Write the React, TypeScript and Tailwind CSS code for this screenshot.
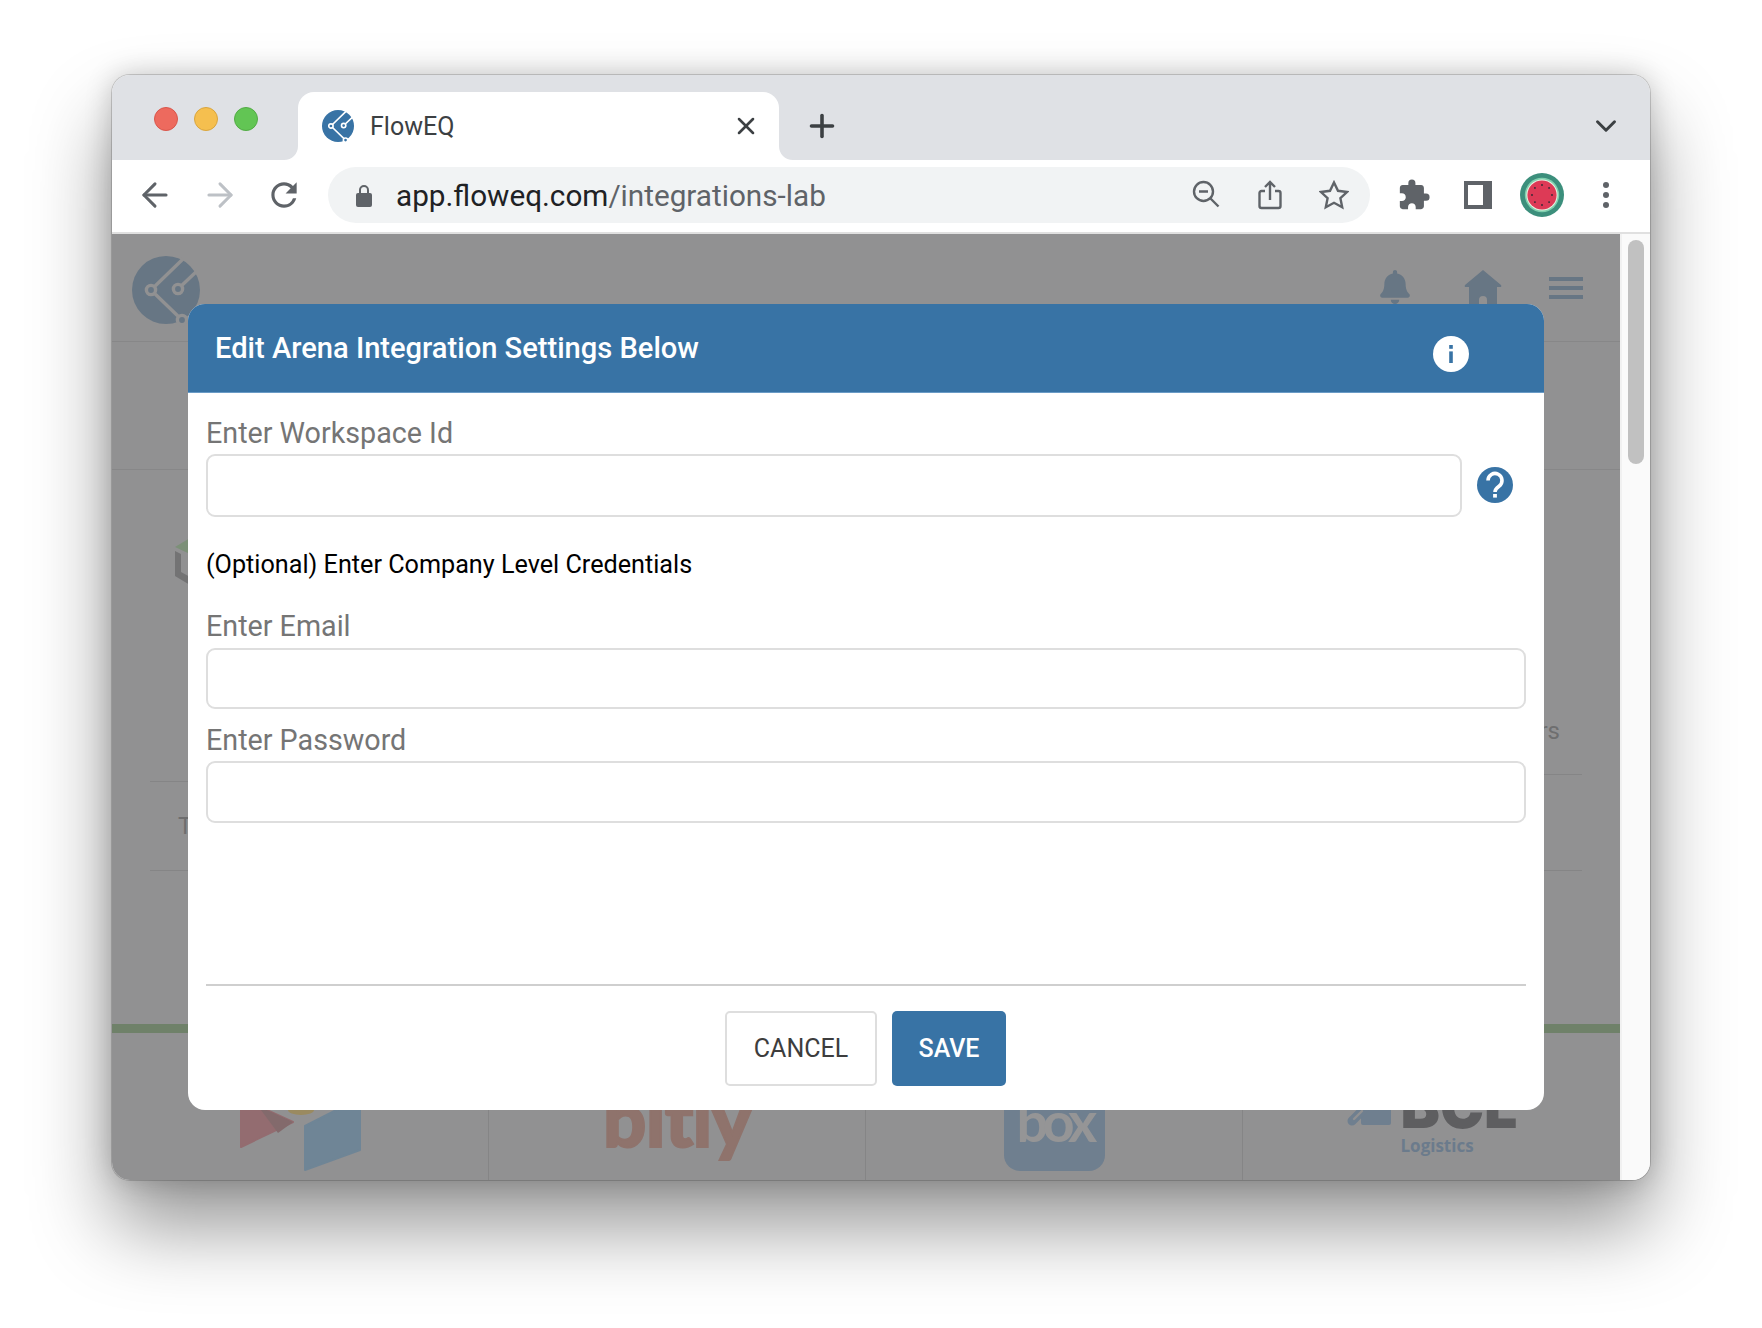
import React from 'react';
import { ArrowLeft, ArrowRight, ChevronDown, Plus, X } from 'lucide-react';
import { MdExtension, MdRefresh } from 'react-icons/md';
import { FaBell } from 'react-icons/fa';

function FlowLogo({ size, fill, line }: { size: number; fill: string; line: string }) {
  return (
    <svg width={size} height={size} viewBox="0 0 68 68" className="overflow-visible shrink-0">
      <circle cx="34" cy="34" r="34" fill={fill} />
      <g stroke={line} strokeWidth="3.4" fill={fill}>
        <path d="M19 34 51 3M46 33 65 15M19 34 50 64" fill="none" />
        <circle cx="19" cy="34" r="4.6" />
        <circle cx="46" cy="33" r="4.6" />
        <circle cx="50" cy="64" r="4.6" />
      </g>
    </svg>
  );
}

function TabFlare({ side }: { side: 'left' | 'right' }) {
  return (
    <svg
      width="14"
      height="14"
      viewBox="0 0 14 14"
      className={side === 'left' ? 'absolute bottom-0 left-[-14px]' : 'absolute bottom-0 right-[-14px] -scale-x-100'}
    >
      <path d="M14 0V14H0C8 14 14 8 14 0Z" fill="#fff" />
    </svg>
  );
}

function Watermelon() {
  const seeds = [0, 45, 90, 135, 180, 225, 270, 315];
  return (
    <svg width="44" height="44" viewBox="0 0 44 44" className="shrink-0">
      <circle cx="22" cy="22" r="22" fill="#3c8f7c" />
      <circle cx="22" cy="22" r="17.2" fill="#7fd0ae" />
      <circle cx="22" cy="22" r="15.6" fill="#e9f3e4" />
      <circle cx="22" cy="22" r="14.6" fill="#dd3a56" />
      {seeds.map((deg) => (
        <circle
          key={deg}
          cx={22 + 10 * Math.cos((deg * Math.PI) / 180)}
          cy={22 + 10 * Math.sin((deg * Math.PI) / 180)}
          r="0.9"
          fill="#2b2b33"
        />
      ))}
    </svg>
  );
}

function InfoBadge() {
  return (
    <svg width="36" height="36" viewBox="0 0 36 36" className="shrink-0 mt-[11px]">
      <circle cx="18" cy="18" r="18" fill="#fff" />
      <rect x="16.2" y="9" width="3.6" height="3.8" fill="#3873a5" />
      <rect x="16.2" y="15.4" width="3.6" height="11.6" fill="#3873a5" />
    </svg>
  );
}

function HelpBadge() {
  return (
    <svg width="36" height="36" viewBox="0 0 36 36" className="shrink-0 ml-[15px] mr-[13px] mb-[14px]">
      <circle cx="18" cy="18" r="18" fill="#3873a5" />
      <path d="M11 13.5a7 7 0 1 1 11 5.7c-2.6 1.8-4 3-4 5.8" fill="none" stroke="#fff" strokeWidth="3.6" />
      <rect x="16.1" y="27" width="3.8" height="3.6" fill="#fff" />
    </svg>
  );
}

function Underlay() {
  return (
    <div className="flex flex-col flex-1 min-w-0 bg-[#919192]">
      <div className="h-[108px] shrink-0 flex items-start pl-[20px] pt-[22px] pr-[37px] border-b border-[#878788]">
        <FlowLogo size={68} fill="#677684" line="#919192" />
        <div className="ml-auto flex items-start mt-[14px]">
          <FaBell size={34} className="text-[#677684]" />
          <svg width="38" height="40" viewBox="0 0 38 40" className="ml-[52px]">
            <path
              d="M19 0 37 15Q38 17 36 17H33V40H23V30Q23 26 19 26 15 26 15 30V40H5V17H2Q0 17 1 15Z"
              fill="#677684"
            />
          </svg>
          <div className="ml-[47px] mt-[7px] flex flex-col gap-[5px]">
            <div className="w-[34px] h-[4px] bg-[#677684]" />
            <div className="w-[34px] h-[4px] bg-[#677684]" />
            <div className="w-[34px] h-[4px] bg-[#677684]" />
          </div>
        </div>
      </div>
      <div className="h-[128px] shrink-0 border-b border-[#878788]" />
      <div className="mx-[38px] shrink-0 grid grid-cols-2 font-['Roboto',sans-serif] text-[24px] text-[#6e6e6f]">
        <div>
          <div className="h-[312px] border-b border-[#858586] pt-[68px] pl-[25px]">
            <svg width="30" height="47" viewBox="0 0 30 47">
              <path d="M0 9 15 0 30 9 15 16Z" fill="#7c9078" />
              <path d="M0 13 6 16V34L15 39V47L0 38Z" fill="#737374" />
            </svg>
          </div>
          <div className="h-[89px] border-b border-[#858586] flex items-center pl-[28px]">T</div>
        </div>
        <div>
          <div className="h-[305px] border-b border-[#858586] flex justify-end items-end pr-[22px] pb-[27px]">
            <span className="leading-[32px]">Users</span>
          </div>
          <div className="h-[96px] border-b border-[#858586]" />
        </div>
      </div>
      <div className="mt-auto h-[9px] shrink-0 bg-[#6f8169]" />
      <div className="h-[147px] shrink-0 grid grid-cols-4 overflow-hidden">
        <div className="flex justify-center items-end pb-[8px] border-r border-[#858586]">
          <svg width="121" height="76" viewBox="0 0 121 76">
            <ellipse cx="61" cy="14" rx="13" ry="5" fill="#9a8a60" />
            <path d="M1 2 53 26 1 51Z" fill="#936c70" stroke="#936c70" strokeWidth="2" strokeLinejoin="round" />
            <path d="M18 10 53 26 38 37Z" fill="#836a6c" />
            <path d="M65 30 120 2V54L65 74Z" fill="#6f8596" stroke="#6f8596" strokeWidth="2" strokeLinejoin="round" />
          </svg>
        </div>
        <div className="flex justify-center items-end pb-[20px] border-r border-[#858586]">
          <span className="font-['Lato',sans-serif] font-black text-[76px] leading-[84px] tracking-[-0.01em] text-[#8f736c] [-webkit-text-stroke:2px_#8f736c]">
            bitly
          </span>
        </div>
        <div className="flex justify-center items-end pb-[9px] border-r border-[#858586]">
          <div className="w-[101px] h-[100px] rounded-[16px] bg-[#6f7f8f] flex justify-center items-end pb-[21px]">
            <span className="font-['Lato',sans-serif] font-bold text-[56px] leading-[58px] tracking-[-0.1em] text-[#959596]">box</span>
          </div>
        </div>
        <div className="flex flex-col items-center justify-end pb-[23px]">
          <div className="w-[170px]">
            <div className="flex items-end">
              <svg width="44" height="20" viewBox="0 0 44 20" className="shrink-0 mb-[1px]">
                <rect x="14" y="0" width="30" height="19" rx="2" fill="#6f7f8f" />
                <path d="M5 15 17 3" stroke="#6f7f8f" strokeWidth="9" strokeLinecap="round" />
                <path d="M7 13 15 5" stroke="#919192" strokeWidth="2.4" strokeLinecap="round" />
              </svg>
              <span className="ml-[10px] font-['Inter',sans-serif] font-black text-[59px] leading-[40px] h-[22px] flex items-end text-[#5e5e60]">
                BCL
              </span>
            </div>
            <span className="block ml-[54px] mt-[8px] font-['Open_Sans',sans-serif] font-bold text-[17px] leading-[22px] text-[#6b7b8c]">
              Logistics
            </span>
          </div>
        </div>
      </div>
    </div>
  );
}

function Modal() {
  return (
    <div className="absolute left-[76px] top-[70px] w-[1356px] h-[806px] rounded-[17px] overflow-hidden bg-white font-['Roboto',sans-serif]">
      <div className="h-[89px] flex items-center justify-between pl-[27px] pr-[75px] bg-[#3873a5] border-b border-[#6a9bc6]">
        <h1 className="mt-[1px] text-[29.1px] font-medium text-white">Edit Arena Integration Settings Below</h1>
        <InfoBadge />
      </div>
      <div className="pl-[18px] pr-[18px] pt-[23px]">
        <div className="flex items-end">
          <div className="flex-1 min-w-0">
            <span className="block text-[28.7px] leading-[34px] text-[#757575]">Enter Workspace Id</span>
            <input className="mt-[4px] block w-full h-[63px] rounded-[9px] border-2 border-[#dedede] bg-white outline-none" />
          </div>
          <HelpBadge />
        </div>
        <p className="mt-[32px] text-[25.2px] leading-[32px] text-black">(Optional) Enter Company Level Credentials</p>
        <label className="block mt-[28px]">
          <span className="block text-[28.7px] leading-[34px] text-[#757575]">Enter Email</span>
          <input className="mt-[5px] block w-full h-[61px] rounded-[9px] border-2 border-[#dedede] bg-white outline-none" />
        </label>
        <label className="block mt-[14px]">
          <span className="block text-[28.7px] leading-[34px] text-[#757575]">Enter Password</span>
          <input className="mt-[4px] block w-full h-[62px] rounded-[9px] border-2 border-[#dedede] bg-white outline-none" />
        </label>
        <hr className="mt-[161px] border-t-2 border-[#cfcfcf]" />
        <div className="mt-[25px] pr-[1px] flex justify-center gap-[15px]">
          <button className="w-[152px] h-[75px] rounded-[5px] border-2 border-[#dedede] bg-white text-[25px] text-[#3d3d3d]">CANCEL</button>
          <button className="w-[114px] h-[75px] rounded-[5px] bg-[#3873a5] text-[25px] font-medium text-white">SAVE</button>
        </div>
      </div>
    </div>
  );
}

export default function App() {
  return (
    <div className="w-full h-[1328px] overflow-hidden bg-white pt-[75px] px-[112px]">
      <div className="h-[1105px] flex flex-col rounded-[18px] overflow-hidden shadow-[0_0_0_1px_rgba(0,0,0,0.16),0_46px_80px_rgba(0,0,0,0.42),0_0_28px_rgba(0,0,0,0.2)]">
        {/* tab strip */}
        <div className="h-[85px] shrink-0 flex items-end bg-[#dfe1e5] pl-[42px] pr-[27px] text-[#3c4043]">
          <div className="self-start mt-[32px] flex gap-[16px]">
            <div className="w-[24px] h-[24px] rounded-full bg-[#ed6a5e] border border-[#d9564b]" />
            <div className="w-[24px] h-[24px] rounded-full bg-[#f5bf4f] border border-[#d9a53e]" />
            <div className="w-[24px] h-[24px] rounded-full bg-[#62c554] border border-[#52ab45]" />
          </div>
          <div className="relative ml-[40px] w-[481px] h-[68px] flex items-center pl-[24px] pr-[19px] bg-white rounded-t-[16px]">
            <TabFlare side="left" />
            <TabFlare side="right" />
            <FlowLogo size={32} fill="#3873a5" line="#fff" />
            <span className="ml-[16px] mt-[1px] font-['Roboto',sans-serif] text-[25px] text-[#3c4043]">FlowEQ</span>
            <X size={28} strokeWidth={2.2} className="ml-auto" />
          </div>
          <div className="ml-[25px] h-[68px] flex items-center">
            <Plus size={36} strokeWidth={2.4} />
          </div>
          <div className="ml-auto h-[68px] flex items-center">
            <ChevronDown size={34} strokeWidth={2.1} />
          </div>
        </div>

        {/* toolbar */}
        <div className="h-[74px] shrink-0 flex items-center pl-[24px] pb-[2px] bg-white border-b-2 border-[#e0e0e0] text-[#5f6368]">
          <ArrowLeft size={38} strokeWidth={1.9} />
          <ArrowRight size={38} strokeWidth={1.9} className="ml-[27px] text-[#bdc1c6]" />
          <MdRefresh size={38} className="ml-[26px]" />
          <div className="ml-[25px] w-[1042px] h-[56px] flex items-center pl-[27px] pr-[21px] rounded-full bg-[#f1f3f4]">
            <svg width="18" height="24" viewBox="0 0 18 24" className="mt-[2px] shrink-0">
              <path d="M5 10V6a4 4 0 0 1 8 0v4" fill="none" stroke="#5f6368" strokeWidth="2" />
              <rect x="1" y="9" width="16" height="14" rx="2" fill="#5f6368" />
            </svg>
            <span className="ml-[23px] mt-[3px] font-['Roboto',sans-serif] text-[29.7px] text-[#202124]">
              app.floweq.com<span className="text-[#5f6368]">/integrations-lab</span>
            </span>
            <svg width="30" height="30" viewBox="0 0 30 30" fill="none" stroke="#5f6368" strokeWidth="2.4" className="ml-auto shrink-0">
              <circle cx="11.5" cy="11.5" r="9.5" />
              <path d="M18.5 18.5 26.5 26.5M7 11.5H16" />
            </svg>
            <svg width="28" height="30" viewBox="0 0 28 30" fill="none" stroke="#5f6368" strokeWidth="2.4" className="ml-[34px] shrink-0">
              <path d="M9 11H5.5a2 2 0 0 0-2 2V26a2 2 0 0 0 2 2H22.5a2 2 0 0 0 2-2V13a2 2 0 0 0-2-2H19" />
              <path d="M14 20V2M9 7l5-5 5 5" />
            </svg>
            <svg width="30" height="30" viewBox="0 0 30 30" fill="none" stroke="#5f6368" strokeWidth="2.4" className="ml-[35px] shrink-0">
              <path d="M15 2.5 19 10.8 28 12 21.4 18.2 23.2 27.2 15 22.8 6.8 27.2 8.6 18.2 2 12 11 10.8Z" />
            </svg>
          </div>
          <MdExtension size={34} className="ml-[27px]" />
          <div className="ml-[33px] w-[28px] h-[28px] border-[4px] border-r-[9px] border-[#5f6368] bg-white" />
          <div className="ml-[28px]">
            <Watermelon />
          </div>
          <div className="ml-[39px] flex flex-col gap-[4px]">
            <div className="w-[6px] h-[6px] rounded-full bg-[#5f6368]" />
            <div className="w-[6px] h-[6px] rounded-full bg-[#5f6368]" />
            <div className="w-[6px] h-[6px] rounded-full bg-[#5f6368]" />
          </div>
        </div>

        {/* page */}
        <div className="relative flex-1 flex min-h-0">
          <Underlay />
          <div className="w-[30px] shrink-0 bg-[#fafafa] border-l-2 border-[#f1f1f1] pl-[6px] pt-[6px]">
            <div className="w-[16px] h-[224px] rounded-full bg-[#c1c1c1]" />
          </div>
          <Modal />
        </div>
      </div>
    </div>
  );
}
